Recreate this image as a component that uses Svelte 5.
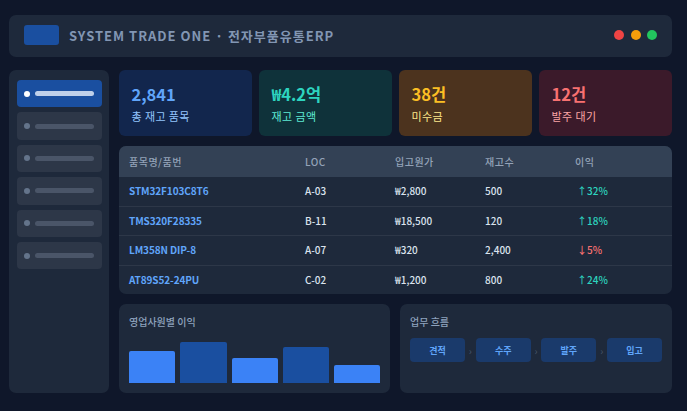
<script>
  const stats = [
    { v: '2,841', l: '총 재고 품목', c: 'blue' },
    { v: '₩4.2억', l: '재고 금액', c: 'teal' },
    { v: '38건', l: '미수금', c: 'amber' },
    { v: '12건', l: '발주 대기', c: 'red' }
  ];
  const rows = [
    ['STM32F103C8T6', 'A-03', '₩2,800', '500', '↑', '32%', true],
    ['TMS320F28335', 'B-11', '₩18,500', '120', '↑', '18%', true],
    ['LM358N DIP-8', 'A-07', '₩320', '2,400', '↓', '5%', false],
    ['AT89S52-24PU', 'C-02', '₩1,200', '800', '↑', '24%', true]
  ];
  const bars = [32, 41, 25, 36, 18];
  const flow = ['견적', '수주', '발주', '입고'];
</script>

<div class="page">
  <header class="top">
    <div class="logo"></div>
    <div class="title">SYSTEM TRADE ONE · 전자부품유통ERP</div>
    <div class="dots"><i class="d1"></i><i class="d2"></i><i class="d3"></i></div>
  </header>
  <div class="main">
    <aside class="side">
      {#each Array(6) as _, i}
        <div class="nav" class:on={i === 0}><i></i><b></b></div>
      {/each}
    </aside>
    <div class="content">
      <section class="stats">
        {#each stats as s}
          <div class="stat {s.c}">
            <div class="val">{s.v}</div>
            <div class="lab">{s.l}</div>
          </div>
        {/each}
      </section>
      <section class="table">
        <div class="row head">
          <span>품목명/품번</span><span>LOC</span><span>입고원가</span><span>재고수</span><span>이익</span>
        </div>
        {#each rows as r}
          <div class="row">
            <span class="pn">{r[0]}</span><span>{r[1]}</span><span>{r[2]}</span><span>{r[3]}</span>
            <span class={r[6] ? 'up' : 'down'}><em>{r[4]}</em>{r[5]}</span>
          </div>
        {/each}
      </section>
      <section class="bottom">
        <div class="panel left">
          <div class="ptitle">영업사원별 이익</div>
          <div class="chart">
            {#each bars as h, i}
              <div class="bar" class:dark={i % 2 === 1} style="height:{h}px"></div>
            {/each}
          </div>
        </div>
        <div class="panel">
          <div class="ptitle">업무 흐름</div>
          <div class="flow">
            {#each flow as f, i}
              {#if i > 0}<span class="arr">›</span>{/if}
              <div class="step">{f}</div>
            {/each}
          </div>
        </div>
      </section>
    </div>
  </div>
</div>

<style>
  :global(body) { margin: 0; background: #0f172a; }
  .page {
    width: 687px; height: 411px; box-sizing: border-box; padding: 15px 15px 18px 9px;
    display: flex; flex-direction: column; gap: 13px; overflow: hidden;
    font-family: "Noto Sans CJK KR", "Noto Sans", sans-serif; background: #0f172a;
  }
  .top {
    height: 42px; flex: none; background: #1e293b; border-radius: 7px;
    display: flex; align-items: center; padding: 0 15px; box-sizing: border-box;
  }
  .logo { width: 35px; height: 20px; border-radius: 3px; background: #1a4fa0; margin-right: 10px; margin-top: -2px; }
  .title { font-size: 13px; font-weight: 700; letter-spacing: 1px; color: #8296b3; margin-top: -2px; }
  .dots { margin-left: auto; display: flex; gap: 6.5px; margin-top: -2px; }
  .dots i { width: 10px; height: 10px; border-radius: 50%; }
  .d1 { background: #ef4444; } .d2 { background: #f59e0b; } .d3 { background: #22c55e; }
  .main { flex: 1; display: flex; gap: 10px; min-height: 0; }
  .side {
    width: 100px; flex: none; background: #1e293b; border-radius: 7px; box-sizing: border-box;
    padding: 10px 7px 10px 8px; display: flex; flex-direction: column; gap: 5px;
  }
  .nav {
    height: 27.4px; flex: none; border-radius: 4px; background: #2d3748; display: flex; align-items: center;
    padding: 0 8px 0 7px; gap: 5px; box-sizing: border-box;
  }
  .nav i { width: 6px; height: 6px; border-radius: 50%; background: #64748b; flex: none; }
  .nav b { flex: 1; height: 5px; border-radius: 3px; background: #4a5568; }
  .nav.on { background: #1a4fa0; }
  .nav.on i { background: #fff; }
  .nav.on b { background: #bfd0ea; }
  .content { flex: 1; min-width: 0; display: flex; flex-direction: column; gap: 10px; }
  .stats { display: flex; gap: 7px; height: 66px; flex: none; }
  .stat { flex: 1; border-radius: 6px; padding: 12px 12.5px; box-sizing: border-box; }
  .val { font-size: 16.5px; font-weight: 700; line-height: 24px; }
  .lab { font-size: 11px; line-height: 16px; margin-top: 2px; letter-spacing: 0.4px; }
  .blue { background: #12264d; } .blue .val { color: #60a5fa; } .blue .lab { color: #93c5fd; }
  .teal { background: #0f323a; } .teal .val { color: #2dd4bf; } .teal .lab { color: #5eead4; }
  .amber { background: #4c331e; } .amber .val { color: #fbbf24; } .amber .lab { color: #fde68a; }
  .red { background: #3b1a2a; } .red .val { color: #f87171; } .red .lab { color: #fca5a5; }
  .table { height: 148px; flex: none; border-radius: 7px; background: #1e293b; overflow: hidden; display: flex; flex-direction: column; }
  .row {
    flex: 1; display: grid; grid-template-columns: 176px 90px 90px 90px 1fr; padding: 0 10px; align-items: center;
    font-size: 10px; color: #dbe3ee; font-weight: 500; border-bottom: 1px solid #2d3748; box-sizing: border-box;
  }
  .row:last-child { border-bottom: 0; }
  .row.head { flex: 0 0 31px; background: #334155; color: #94a3b8; border: 0; letter-spacing: 0.5px; }
  .row > span { position: relative; top: -0.5px; }
  .pn { color: #60a5fa; font-weight: 700; letter-spacing: -0.1px; }
  .up { color: #2dd4bf; } .down { color: #f87171; }
  .up em, .down em { font-style: normal; margin-left: 2px; }
  .bottom { flex: 1; display: flex; gap: 10px; min-height: 0; }
  .panel { flex: 1; background: #1e293b; border-radius: 7px; padding: 10px; box-sizing: border-box; display: flex; flex-direction: column; }
  .panel.left { flex: 0 0 271px; padding-right: 9.5px; }
  .ptitle { font-size: 10px; line-height: 15px; color: #8ea2bd; font-weight: 500; }
  .chart { flex: 1; display: flex; align-items: flex-end; gap: 5px; }
  .bar { flex: 1; background: #3b82f6; border-radius: 2px 2px 0 0; }
  .bar.dark { background: #1a4fa0; }
  .flow { display: flex; align-items: center; margin-top: 9px; justify-content: space-between; }
  .step { width: 55px; height: 24px; border-radius: 4px; background: #1a3a6b; color: #60a5fa; font-size: 9px; font-weight: 700; display: flex; align-items: center; justify-content: center; }
  .arr { color: #475569; font-size: 10px; }
</style>
